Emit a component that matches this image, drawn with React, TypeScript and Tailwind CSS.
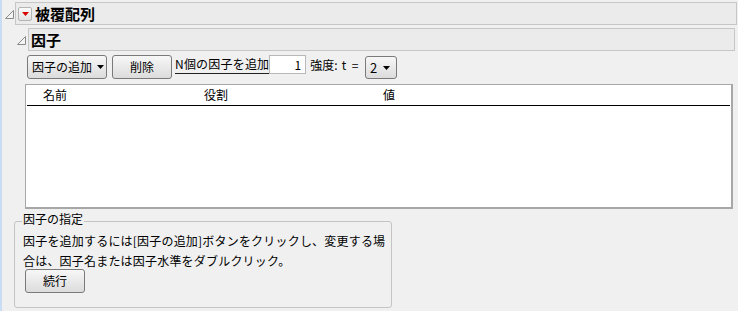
import React from "react";

const font = { fontFamily: '"Noto Sans CJK JP", "Noto Sans", sans-serif' };

function Corner() {
  return (
    <svg width="9" height="9" viewBox="0 0 9 9" className="shrink-0">
      <path d="M0.5 8.5 L8.5 0.5 L8.5 8.5 Z" fill="#f4f4f4" stroke="#8a8a8a" strokeWidth="1" />
    </svg>
  );
}

function Caret({ className = "" }: { className?: string }) {
  return (
    <svg width="7" height="4" viewBox="0 0 7 4" className={className}>
      <path d="M0 0 L7 0 L3.5 4 Z" fill="currentColor" />
    </svg>
  );
}

const btn =
  "flex items-center border border-[#7a7a7a] rounded-[3px] bg-gradient-to-b from-[#f7f7f7] to-[#dcdcdc] text-[12px] text-black";

export default function App() {
  return (
    <div
      className="relative w-[738px] h-[311px] overflow-hidden bg-[#f0f0f0] border-l-2 border-[#c9ddf5] text-black"
      style={font}
    >
      {/* outer outline header */}
      <div className="flex items-center mt-[2px]">
        <div className="w-[13px] flex justify-center pl-[2px] pt-[1px]">
          <Corner />
        </div>
        <div className="flex-1 mr-[1px] h-[23px] flex items-center bg-[#ebebeb] border border-[#c6c6c6]">
          <div className="ml-[2px] w-[14px] h-[14px] flex items-center justify-center border border-[#b5b5b5] rounded-[2px] bg-gradient-to-b from-[#fbfbfb] to-[#e2e2e2] text-[#d80000]">
            <Caret />
          </div>
          <span className="ml-[3px] text-[15px] font-bold leading-none">被覆配列</span>
        </div>
      </div>

      {/* inner outline header */}
      <div className="flex items-center mt-[3px] ml-[13px]">
        <div className="w-[13px] flex justify-center pt-[1px]">
          <Corner />
        </div>
        <div className="flex-1 mr-[3px] h-[23px] flex items-center bg-[#ebebeb] border border-[#c6c6c6]">
          <span className="ml-[2px] text-[15px] font-bold leading-none">因子</span>
        </div>
      </div>

      {/* toolbar */}
      <div className="flex items-start mt-[4px] ml-[25px] h-[25px]">
        <div className={`${btn} w-[80px] h-[24px] pl-[4px] gap-[5px]`}>
          <span>因子の追加</span>
          <Caret />
        </div>
        <div className={`${btn} ml-[5px] w-[60px] h-[24px] justify-center`}>削除</div>
        <div className="ml-[3px] h-[19px] flex items-center border-b border-[#222] text-[12px] tracking-[0.2px]">
          N個の因子を追加
        </div>
        <div className="w-[37px] h-[19px] bg-white border border-[#b8b8b8] text-[12px] text-right pr-[4px] leading-[17px]">
          1
        </div>
        <div className="ml-[4px] h-[19px] flex items-center text-[12px] gap-[4px]">
          <span>強度:</span>
          <span className="tracking-[1.5px]">t =</span>
        </div>
        <div className={`${btn} ml-[5px] mt-[1px] w-[32px] h-[23px] pl-[4px] gap-[6px]`}>
          <span className="text-[13px]">2</span>
          <Caret />
        </div>
      </div>

      {/* table */}
      <div className="ml-[23px] mr-[5px] mt-[4px] h-[125px] bg-white border border-[#a7a7a7] border-r-2 border-b-2">
        <div className="flex h-[21px] items-end border-b border-black mx-px text-[12px] pb-[1px]">
          <span className="ml-[16px] w-[161px]">名前</span>
          <span className="w-[179px]">役割</span>
          <span>値</span>
        </div>
      </div>

      {/* group box */}
      <div className="relative ml-[12px] mt-[12px] w-[378px] h-[87px] border border-[#c4c4c4] rounded-[3px] text-[12px]">
        <span className="absolute -top-[11px] left-[7px] px-[1px] bg-[#f0f0f0] leading-[16px]">因子の指定</span>
        <div className="pt-[8px] pl-[8px] tracking-[0.2px]">
          <div className="h-[21px] leading-[21px]">因子を追加するには[因子の追加]ボタンをクリックし、変更する場</div>
          <div className="mt-[3px] h-[14px] leading-[14px]">合は、因子名または因子水準をダブルクリック。</div>
        </div>
        <div className={`${btn} ml-[10px] mt-[1px] w-[60px] h-[24px] justify-center`}>続行</div>
      </div>
    </div>
  );
}
